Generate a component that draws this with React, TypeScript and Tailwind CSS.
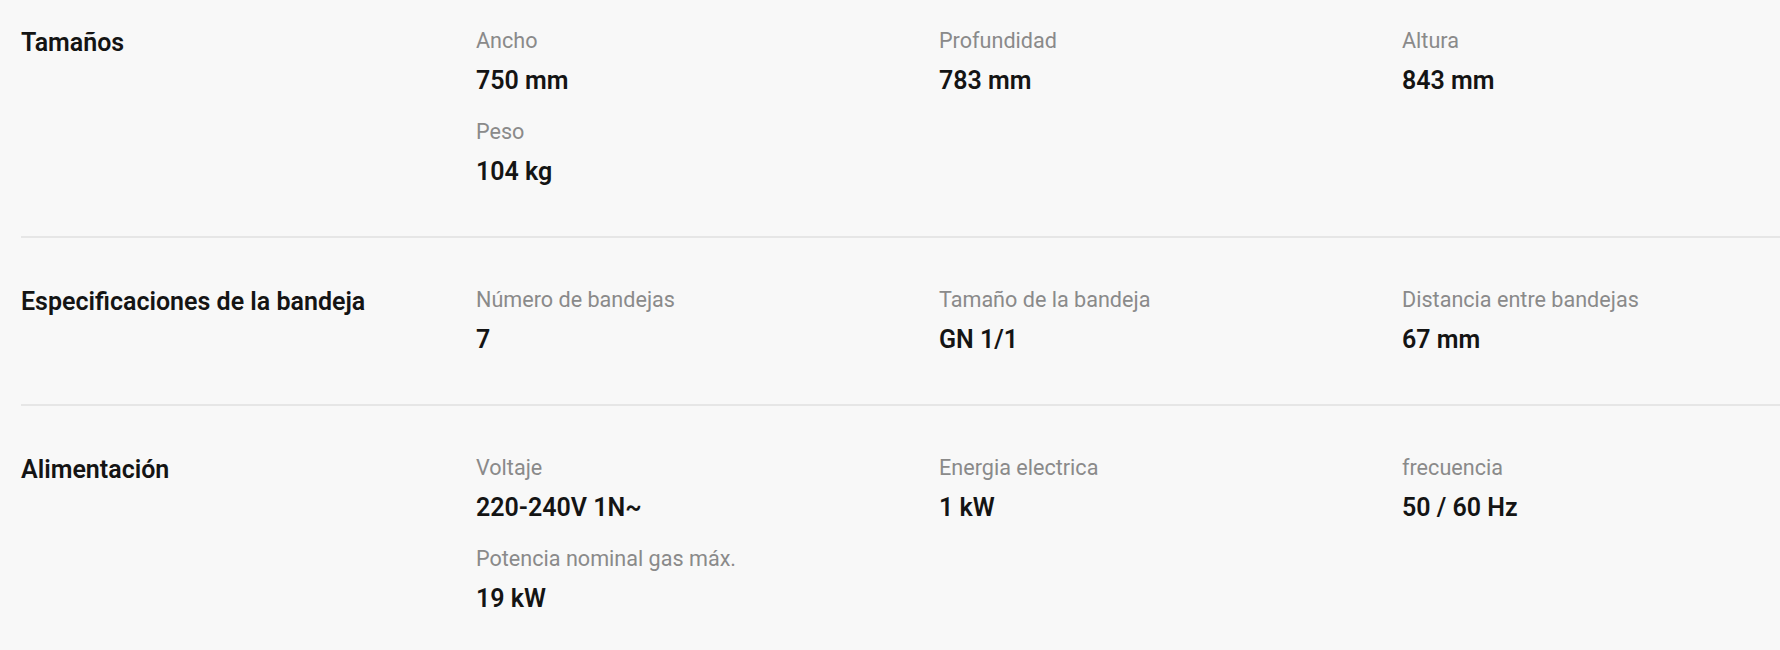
import React from 'react';

type TSpec = {
  label: string;
  value: string;
};

type TSpecGroup = {
  title: string;
  items: TSpec[];
};

const groups: TSpecGroup[] = [
  {
    title: 'Tamaños',
    items: [
      { label: 'Ancho', value: '750 mm' },
      { label: 'Profundidad', value: '783 mm' },
      { label: 'Altura', value: '843 mm' },
      { label: 'Peso', value: '104 kg' },
    ],
  },
  {
    title: 'Especificaciones de la bandeja',
    items: [
      { label: 'Número de bandejas', value: '7' },
      { label: 'Tamaño de la bandeja', value: 'GN 1/1' },
      { label: 'Distancia entre bandejas', value: '67 mm' },
    ],
  },
  {
    title: 'Alimentación',
    items: [
      { label: 'Voltaje', value: '220-240V 1N~' },
      { label: 'Energia electrica', value: '1 kW' },
      { label: 'frecuencia', value: '50 / 60 Hz' },
      { label: 'Potencia nominal gas máx.', value: '19 kW' },
    ],
  },
];

const SpecItem = ({ label, value }: TSpec) => {
  return (
    <div className="flex flex-col gap-2.5">
      <p className="text-[21.6px] leading-7 text-[#8a8a8a]">{label}</p>
      <p className="text-[25px] leading-8 font-semibold text-[#141414]">
        {value}
      </p>
    </div>
  );
};

const SpecRow = ({ group, first }: { group: TSpecGroup; first: boolean }) => {
  return (
    <div
      className={`flex border-b-2 border-[#e6e6e6] pb-12 ${
        first ? 'pt-[27px]' : 'pt-12'
      }`}
    >
      <h3 className="w-[455px] shrink-0 text-[25px] leading-8 font-semibold text-[#141414]">
        {group.title}
      </h3>
      <div className="grid shrink-0 grid-cols-[463px_463px_463px] gap-y-[21px]">
        {group.items.map((item) => (
          <SpecItem key={item.label} {...item} />
        ))}
      </div>
    </div>
  );
};

export default function App() {
  return (
    <div className="h-[650px] w-full overflow-hidden bg-[#f8f8f8] pl-[21px] font-['Roboto','Liberation_Sans',sans-serif]">
      {groups.map((group, i) => (
        <SpecRow key={group.title} group={group} first={i === 0} />
      ))}
    </div>
  );
}
